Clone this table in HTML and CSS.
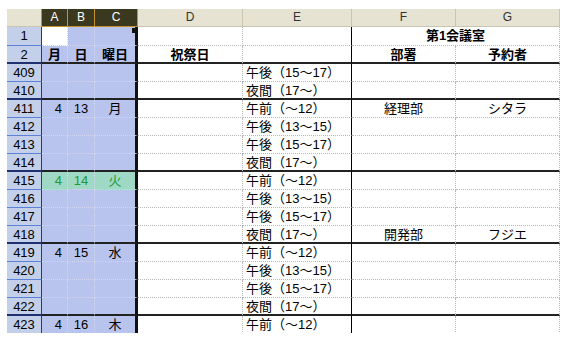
FILE: index.html
```html
<!DOCTYPE html>
<html lang="ja">
<head>
<meta charset="utf-8">
<link rel="stylesheet" href="styles.css">
</head>
<body>
<div class="sheet">
  <div class="row">
    <div class="hd corner"></div>
    <div class="hd sel">A</div><div class="hd sel">B</div><div class="hd sel">C</div>
    <div class="hd">D</div><div class="hd">E</div><div class="hd">F</div><div class="hd">G</div>
  </div>
  <div class="row">
    <div class="rh">1</div>
    <div class="s ca active"></div><div class="s cb"></div><div class="s cc handle-cell"><span class="handle"></span></div>
    <div class="w cd"></div><div class="w ce"></div><div class="w merged bold">第1会議室</div>
  </div>
  <div class="row sep">
    <div class="rh">2</div>
    <div class="s ca bold ctr">月</div><div class="s cb bold">日</div><div class="s cc bold">曜日</div>
    <div class="w cd bold">祝祭日</div><div class="w ce"></div><div class="w cf bold">部署</div><div class="w cg bold">予約者</div>
  </div>
  <div class="row">
    <div class="rh">409</div>
    <div class="s ca"></div><div class="s cb"></div><div class="s cc"></div>
    <div class="w cd"></div><div class="w ce">午後（15～17）</div><div class="w cf"></div><div class="w cg"></div>
  </div>
  <div class="row sep">
    <div class="rh">410</div>
    <div class="s ca"></div><div class="s cb"></div><div class="s cc"></div>
    <div class="w cd"></div><div class="w ce">夜間（17～）</div><div class="w cf"></div><div class="w cg"></div>
  </div>
  <div class="row">
    <div class="rh">411</div>
    <div class="s ca">4</div><div class="s cb">13</div><div class="s cc">月</div>
    <div class="w cd"></div><div class="w ce">午前（～12）</div><div class="w cf">経理部</div><div class="w cg">シタラ</div>
  </div>
  <div class="row">
    <div class="rh">412</div>
    <div class="s ca"></div><div class="s cb"></div><div class="s cc"></div>
    <div class="w cd"></div><div class="w ce">午後（13～15）</div><div class="w cf"></div><div class="w cg"></div>
  </div>
  <div class="row">
    <div class="rh">413</div>
    <div class="s ca"></div><div class="s cb"></div><div class="s cc"></div>
    <div class="w cd"></div><div class="w ce">午後（15～17）</div><div class="w cf"></div><div class="w cg"></div>
  </div>
  <div class="row sep">
    <div class="rh">414</div>
    <div class="s ca"></div><div class="s cb"></div><div class="s cc"></div>
    <div class="w cd"></div><div class="w ce">夜間（17～）</div><div class="w cf"></div><div class="w cg"></div>
  </div>
  <div class="row hl">
    <div class="rh">415</div>
    <div class="s ca">4</div><div class="s cb">14</div><div class="s cc">火</div>
    <div class="w cd"></div><div class="w ce">午前（～12）</div><div class="w cf"></div><div class="w cg"></div>
  </div>
  <div class="row">
    <div class="rh">416</div>
    <div class="s ca"></div><div class="s cb"></div><div class="s cc"></div>
    <div class="w cd"></div><div class="w ce">午後（13～15）</div><div class="w cf"></div><div class="w cg"></div>
  </div>
  <div class="row">
    <div class="rh">417</div>
    <div class="s ca"></div><div class="s cb"></div><div class="s cc"></div>
    <div class="w cd"></div><div class="w ce">午後（15～17）</div><div class="w cf"></div><div class="w cg"></div>
  </div>
  <div class="row sep">
    <div class="rh">418</div>
    <div class="s ca"></div><div class="s cb"></div><div class="s cc"></div>
    <div class="w cd"></div><div class="w ce">夜間（17～）</div><div class="w cf">開発部</div><div class="w cg">フジエ</div>
  </div>
  <div class="row">
    <div class="rh">419</div>
    <div class="s ca">4</div><div class="s cb">15</div><div class="s cc">水</div>
    <div class="w cd"></div><div class="w ce">午前（～12）</div><div class="w cf"></div><div class="w cg"></div>
  </div>
  <div class="row">
    <div class="rh">420</div>
    <div class="s ca"></div><div class="s cb"></div><div class="s cc"></div>
    <div class="w cd"></div><div class="w ce">午後（13～15）</div><div class="w cf"></div><div class="w cg"></div>
  </div>
  <div class="row">
    <div class="rh">421</div>
    <div class="s ca"></div><div class="s cb"></div><div class="s cc"></div>
    <div class="w cd"></div><div class="w ce">午後（15～17）</div><div class="w cf"></div><div class="w cg"></div>
  </div>
  <div class="row sep">
    <div class="rh">422</div>
    <div class="s ca"></div><div class="s cb"></div><div class="s cc"></div>
    <div class="w cd"></div><div class="w ce">夜間（17～）</div><div class="w cf"></div><div class="w cg"></div>
  </div>
  <div class="row">
    <div class="rh">423</div>
    <div class="s ca">4</div><div class="s cb">16</div><div class="s cc">木</div>
    <div class="w cd"></div><div class="w ce">午前（～12）</div><div class="w cf"></div><div class="w cg"></div>
  </div>
</div>
</body>
</html>
```
FILE: styles.css
```css
html, body {
  margin: 0;
  background: #fff;
}
body {
  padding: 9px 0 0 7px;
}
.sheet {
  display: grid;
  grid-template-columns: 35px 26px 27px 43px 105px 109px 104px 104px;
  grid-template-rows: 18px 19px repeat(16, 18px);
  width: 553px;
  height: 324px;
  overflow: hidden;
  font-family: "Liberation Sans", "Noto Sans CJK JP", sans-serif;
  font-size: 13px;
  color: #000;
}
.row {
  display: contents;
}
.sheet .row > div {
  box-sizing: border-box;
  line-height: 17px;
  white-space: nowrap;
  overflow: hidden;
  text-align: center;
}
.hd {
  background: #e6e3d3;
  border-right: 1px solid #c9c5b1;
  border-bottom: 1px solid #c9c5b1;
  font-size: 12px;
  color: #333;
}
.hd.sel {
  background: #3b3820;
  color: #fff;
  border-right-color: #c4912e;
  border-bottom-color: #c4912e;
}
.hd.corner {
  border-right-color: #c4912e;
}
.rh {
  background: #c4d0ea;
  border-right: 1px solid #1e3a8c;
  border-bottom: 1px solid #5b82d6;
}
.s {
  background: #b8c3ee;
  border-right: 1px dotted #d2d7ef;
  border-bottom: 1px dotted #d2d7ef;
}
.s.cc {
  border-right: 3px solid #111;
}
.sheet .row > .s.ca {
  text-align: right;
  padding-right: 5px;
}
.sheet .row > .s.ca.ctr {
  text-align: center;
  padding-right: 0;
}
.s.active {
  background: #fff;
}
.w {
  background: #fff;
  border-right: 1px dotted #b8b8b8;
  border-bottom: 1px dotted #b8b8b8;
}
.sheet .row > .w.ce {
  border-right: 1px solid #000;
  text-align: left;
  padding-left: 3px;
}
.merged {
  grid-column: span 2;
}
.bold {
  font-weight: bold;
}
.sep > .w,
.sep > .s {
  border-bottom: 2px solid #222;
}
.sep > .rh {
  border-bottom: 2px solid #1e3070;
}
.hl > .s {
  background: #9fd9c6;
  color: #1d9a3a;
}
.sheet .row > .handle-cell {
  position: relative;
  overflow: visible;
}
.handle {
  position: absolute;
  right: -2px;
  top: 1px;
  width: 5px;
  height: 5px;
  background: #111;
  z-index: 1;
}
```
